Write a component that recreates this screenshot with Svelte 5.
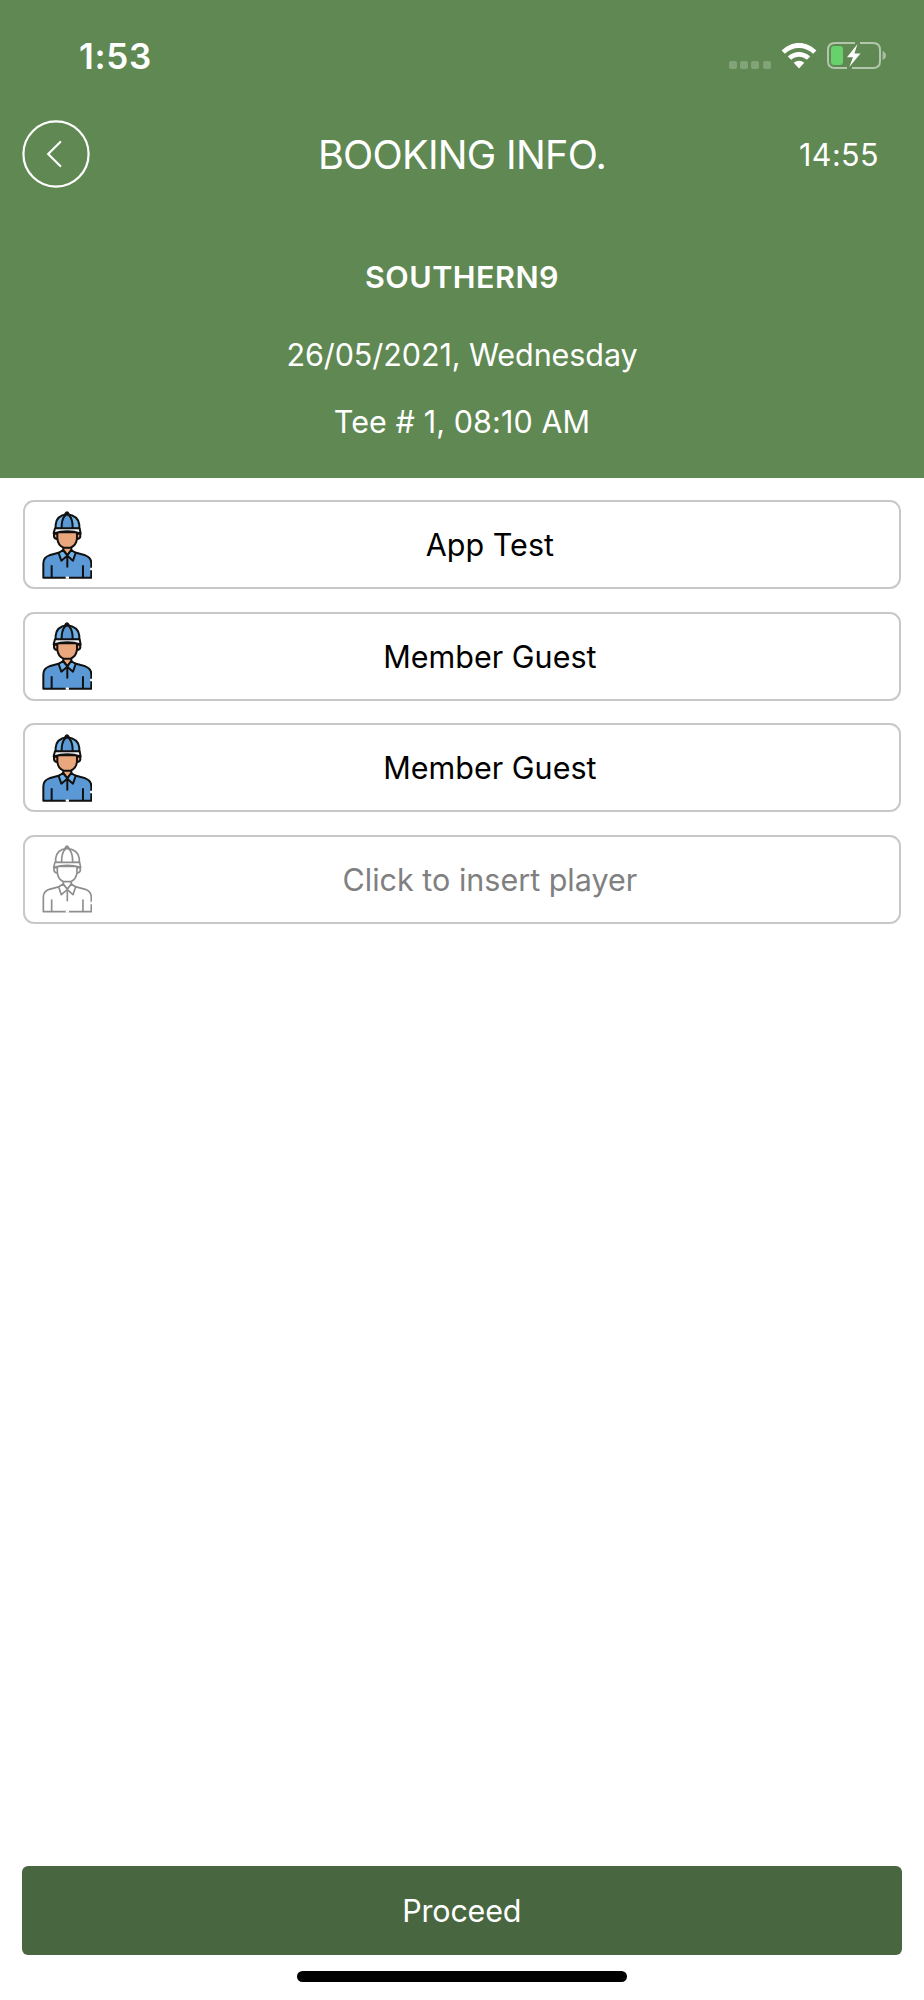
<script lang="ts">
    type Player = { name: string; empty?: boolean };

    let players: Player[] = $state([
        { name: "App Test" },
        { name: "Member Guest" },
        { name: "Member Guest" },
        { name: "Click to insert player", empty: true },
    ]);
</script>

<div class="screen">
    <header>
        <div class="status">
            <span class="clock">1:53</span>
            <div class="indicators">
                <div class="signal"><i></i><i></i><i></i><i></i></div>
                <svg class="wifi" viewBox="0 0 36 27">
                    <path d="M0.6 8.6C10.5-1.7 25.5-1.7 35.4 8.6L32.2 11.8C24 3.9 12 3.9 3.8 11.8Z" />
                    <path d="M6.8 14.6C13.2 8.4 22.8 8.4 29.2 14.6L25.8 17.7C21.3 13.7 14.7 13.7 10.2 17.7Z" />
                    <path d="M12.7 20.7C15.8 18 20.2 18 23.3 20.7L18 26.4Z" />
                </svg>
                <svg class="battery" viewBox="0 0 60 27">
                    <path class="shell" d="M28 1H8Q1 1 1 8V19Q1 26 8 26H20M25 26H46Q53 26 53 19V8Q53 1 46 1H33" />
                    <path class="tip" d="M55.5 9Q59 10.5 59 13.5T55.5 18Z" />
                    <rect class="level" x="4" y="4" width="12" height="19" rx="3" />
                    <path class="bolt" d="M30.5 2L20 15.2H26L22.3 25L33.5 11.4H27.4Z" />
                </svg>
            </div>
        </div>

        <nav>
            <button class="back" aria-label="Back">
                <svg viewBox="0 0 68 68">
                    <circle cx="34" cy="34" r="32.6" />
                    <path d="M38.3 22L26.2 34L38.3 46" />
                </svg>
            </button>
            <h1>BOOKING INFO.</h1>
            <span class="timer">14:55</span>
        </nav>

        <div class="details">
            <h2>SOUTHERN9</h2>
            <p class="date">26/05/2021, Wednesday</p>
            <p class="tee">Tee # 1, 08:10 AM</p>
        </div>
    </header>

    <main>
        {#each players as player}
            <button class="player" class:empty={player.empty}>
                <svg class="avatar" viewBox="66 122 151 204">
                    <path class="shirt" d="M70 322V279Q70 261 88 255L121 246H163L196 255Q214 262 214 279V322Z" />
                    <path class="skin" d="M130 226V239L142 255L154 239V226Z" />
                    <path class="skin" d="M112 190H102V198Q103 205 112 206M171 190H181V198Q180 205 171 206" />
                    <path class="skin" d="M112 186V205Q114 226 131 232H152Q169 225 171 205V186Z" />
                    <path class="cap" d="M107 175V163Q109 136 141 132Q175 136 178 163V175Z" />
                    <path class="panel" d="M125 174Q124 146 137 133H146Q159 146 158 174" />
                    <path class="button-top" d="M136 130Q141 121 146 130Z" />
                    <path class="brim" d="M105 174H179L182 189Q162 183 142 183Q121 183 101 189Z" />
                    <path class="collar" d="M129 239L116 248L124 271L142 256L159 271L167 248L154 239L142 255Z" />
                    <path class="seam" d="M142 256V289M95 287V321M189 287V321" />
                    <path class="gap" d="M137 322H147M214 292V300" />
                </svg>
                <span>{player.name}</span>
            </button>
        {/each}
    </main>

    <footer>
        <button class="proceed">Proceed</button>
        <div class="home"></div>
    </footer>
</div>

<style>
    :global(body) {
        margin: 0;
        background: #fff;
    }

    .screen {
        width: 924px;
        height: 2000px;
        display: flex;
        flex-direction: column;
        font-family: Inter, Roboto, "Liberation Sans", sans-serif;
        font-size: 30.5px;
        color: #000;
    }

    header {
        height: 478px;
        box-sizing: border-box;
        padding-top: 42px;
        background: #5f8853;
        color: #fff;
    }

    button {
        font: inherit;
        letter-spacing: inherit;
        color: inherit;
        background: none;
        border: 0;
        padding: 0;
    }

    h1, h2, p {
        margin: 0;
        font-weight: 400;
    }

    .status {
        display: flex;
        justify-content: space-between;
        height: 27px;
        padding: 0 37px 0 79px;
    }

    .clock {
        font-size: 35px;
        font-weight: 600;
        line-height: 28px;
        letter-spacing: 0.7px;
    }

    .indicators {
        display: flex;
        align-items: flex-start;
    }

    .signal {
        display: flex;
        gap: 3.2px;
        margin: 18.5px 10px 0 0;
    }

    .signal i {
        width: 8px;
        height: 8px;
        border-radius: 2px;
        background: rgba(255, 255, 255, 0.22);
    }

    .wifi {
        width: 36px;
        height: 27px;
        margin-right: 10.5px;
        fill: #fff;
    }

    .battery {
        width: 60px;
        height: 27px;
    }

    .shell {
        fill: none;
        stroke: #b2c6ac;
        stroke-width: 2;
    }

    .tip {
        fill: #a5bd9e;
    }

    .level {
        fill: #67d16b;
    }

    .bolt {
        fill: #fff;
    }

    nav {
        display: grid;
        grid-template-columns: 1fr auto 1fr;
        align-items: center;
        height: 68px;
        margin-top: 51px;
        padding: 0 22px;
    }

    .back, .back svg {
        display: block;
        width: 68px;
        height: 68px;
    }

    .back svg {
        fill: none;
        stroke: #fff;
        stroke-width: 2.2;
        stroke-linecap: round;
    }

    h1 {
        padding-top: 1px;
        font-size: 39.5px;
        letter-spacing: -0.7px;
    }

    .timer {
        justify-self: end;
        margin-right: 23px;
        letter-spacing: 0.4px;
    }

    .details {
        display: flex;
        flex-direction: column;
        align-items: center;
        padding-top: 69px;
        line-height: 40px;
    }

    h2 {
        font-size: inherit;
        font-weight: 600;
        letter-spacing: 0.5px;
    }

    .date {
        margin-top: 38px;
        letter-spacing: -0.08px;
    }

    .tee {
        margin-top: 27px;
        letter-spacing: 0.1px;
    }

    main {
        flex: 1;
        display: flex;
        flex-direction: column;
        gap: 22.67px;
        padding: 22px 23px 22px 22.5px;
    }

    .player {
        display: flex;
        align-items: center;
        height: 89px;
        box-sizing: border-box;
        padding: 0 11px 0 17px;
        border: 2px solid #c8c8c8;
        border-radius: 11px;
    }

    .player span {
        flex: 1;
    }

    .avatar {
        width: 50.3px;
        height: 68px;
        stroke: #111;
        stroke-width: 6;
        stroke-linejoin: round;
        stroke-linecap: round;
    }

    .shirt, .panel {
        fill: #5b99d6;
    }

    .skin {
        fill: #eaa67c;
    }

    .brim {
        fill: #f6f6f6;
    }

    .collar, .cap {
        fill: #70b3e8;
    }

    .seam {
        fill: none;
    }

    .gap {
        stroke: #fff;
        stroke-linecap: butt;
        stroke-width: 7;
    }

    .empty {
        color: #808080;
    }

    .empty .avatar {
        stroke: #8e8e8e;
        stroke-width: 5;
    }

    .empty .avatar path {
        fill: #fff;
    }

    .empty .avatar .seam {
        fill: none;
    }

    footer {
        display: flex;
        flex-direction: column;
        align-items: center;
        padding: 0 22.5px 18px 22px;
    }

    .proceed {
        align-self: stretch;
        height: 89px;
        margin-bottom: 16px;
        border-radius: 6px;
        background: #48663f;
        color: #fff;
        letter-spacing: -0.2px;
    }

    .home {
        width: 330px;
        height: 11px;
        border-radius: 6px;
        background: #000;
    }
</style>
